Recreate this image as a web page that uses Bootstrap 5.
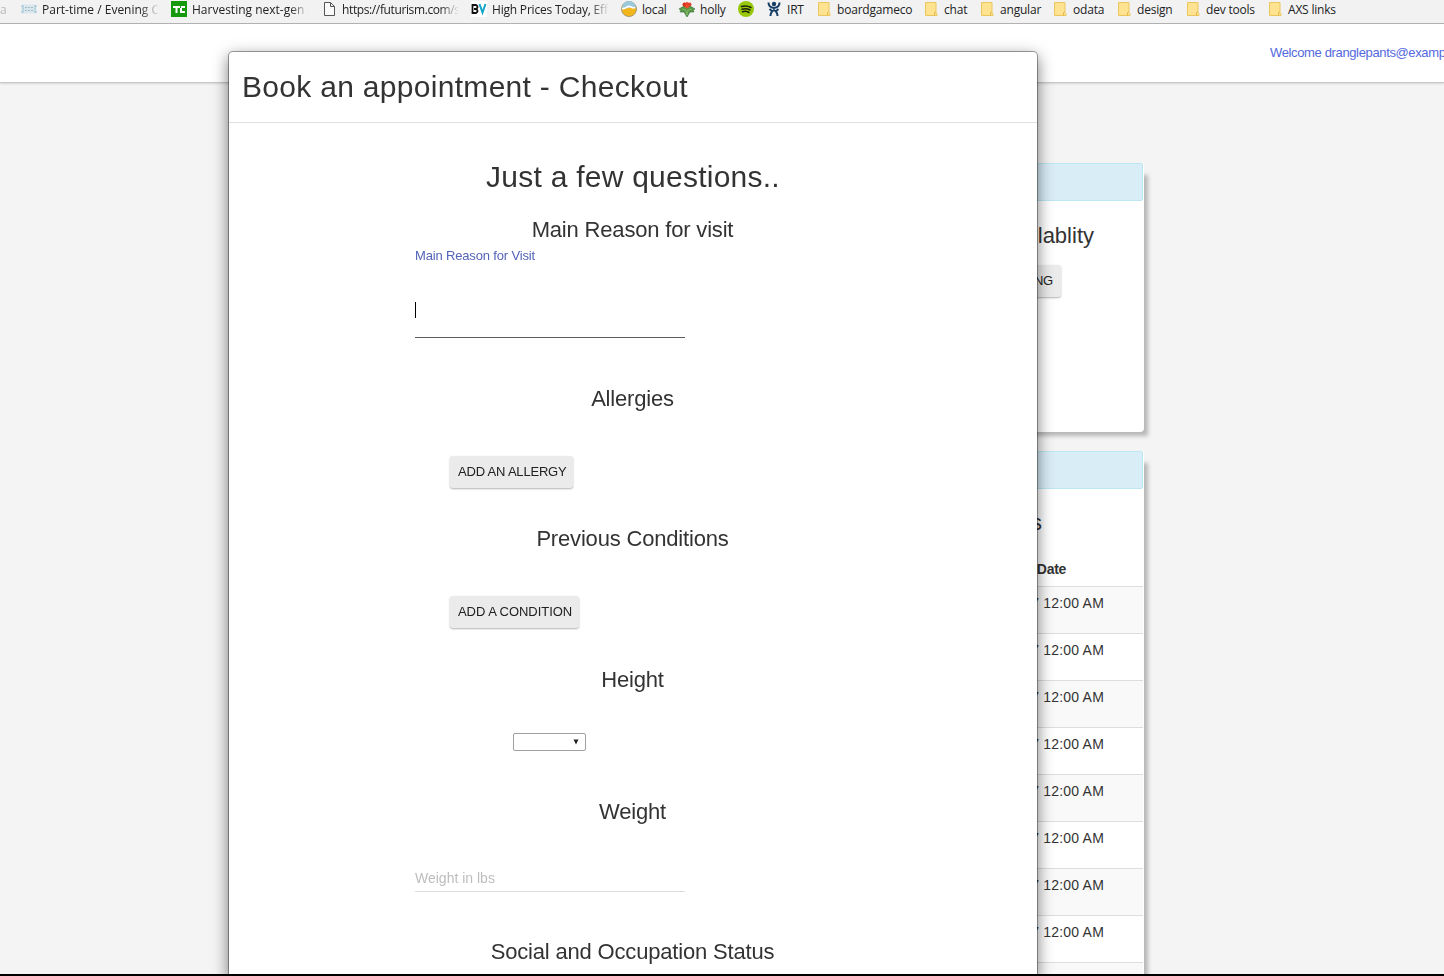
<!DOCTYPE html>
<html lang="en">
<head>
<meta charset="utf-8">
<meta name="viewport" content="width=device-width, initial-scale=1">
<title>Book an appointment</title>
<link href="https://cdn.jsdelivr.net/npm/bootstrap@5.3.0/dist/css/bootstrap.min.css" rel="stylesheet">
<style>
  html, body { height: 100%; }
  body { font-family: "Liberation Sans", Arial, sans-serif; font-size: 14px; line-height: 20px; color: #333; background: #f4f4f4; overflow: hidden; }

  /* bookmarks bar */
  .bookmarks { display: grid; grid-template-columns: 21px 150px 150px 150px 150px 58px 59px 28px 50px 107px 56px 73px 64px 69px 82px 1fr; height: 24px; padding-bottom: 6px; background: #f2f2f2; border-bottom: 1px solid #b3b3b3; font: 12px/17px "Open Sans", "Noto Sans", sans-serif; letter-spacing: -.2px; color: #222; white-space: nowrap; }
  .bookmarks > div { display: flex; align-items: center; gap: 5px; min-width: 0; }
  .bookmarks svg { width: 16px; height: 16px; flex: none; }
  .bookmarks span { padding-top: 1px; }
  .bookmarks .cut { width: 117px; overflow: hidden; -webkit-mask-image: linear-gradient(90deg, #000 84%, transparent 100%); mask-image: linear-gradient(90deg, #000 84%, transparent 100%); }
  .bookmarks .cut.wide { letter-spacing: 0; }
  .bookmarks .cut.tight { letter-spacing: -.38px; }

  .topbar { height: 59px; border-bottom: 1px solid #c8c8c8; box-shadow: 0 1px 2px rgba(0,0,0,.12); font-size: 13px; letter-spacing: -.36px; }
  .topbar a { color: #5468e0; margin-left: 1270px; white-space: nowrap; }

  /* dashboard panels */
  .panels { margin: 80px 300px 0 0; gap: 19px; }
  .panel-box { width: 420px; height: 269px; padding-right: 1px; background: #fff; border-radius: 4px; box-shadow: 8px 8px 4px -4px #b8b8b8; }
  .panel-box.tall { height: 525px; overflow: hidden; border-radius: 4px 4px 0 0; }
  .panel-strip { height: 38px; background: #d9edf7; border: 1px solid #bce8f1; border-radius: 2px; }
  .panel-box h4 { font-size: 22px; line-height: 24px; }
  .avail { margin: 23px 49px 17px 0; }
  .booking { margin-right: 82px; }
  .appts { margin: 22px 101px 0 0; }
  .btn-flat { height: 32px; padding: 0 8px; font-size: 13px; line-height: 30px; letter-spacing: -.2px; color: #212121; background: #ebebeb; border: 0; border-radius: 3px; box-shadow: 0 1px 2px rgba(0,0,0,.3); }
  .appt-table { margin-top: 20px; text-align: right; --bs-table-striped-bg: #f9f9f9; --bs-table-color: #333; --bs-table-striped-color: #333; border-color: #ddd; }
  .appt-table th { height: 31px; padding: 3px 77px 7px 0; line-height: 20px; letter-spacing: -.3px; border-bottom: 1px solid #ddd; }
  .appt-table td { height: 47px; padding: 6px 39px 0 0; letter-spacing: .2px; border-bottom: 1px solid #ddd; }

  /* checkout dialog */
  .checkout { overflow: hidden; }
  .checkout .modal-dialog { width: 810px; max-width: none; margin: 51px 0 0 228px; }
  .checkout .modal-content { height: 925px; border: 1px solid rgba(0,0,0,.35); border-bottom: 0; border-radius: 5px 5px 0 0; box-shadow: 0 5px 15px rgba(0,0,0,.5); color: #333; }
  .checkout .modal-header { height: 71px; padding: 0 13px; border-bottom: 1px solid #e0e0e0; }
  .checkout h2 { font-size: 30px; line-height: 34px; font-weight: 400; letter-spacing: .3px; }
  .checkout h4 { font-size: 22px; line-height: 24px; font-weight: 400; text-align: center; margin: 0; padding-right: 1px; letter-spacing: -.18px; }
  .checkout .modal-body { padding: 37px 0 0; }
  .checkout .intro { text-align: center; margin: 0 0 24px; letter-spacing: .24px; }
  .q-mid { height: 140px; }
  .q-height { height: 132px; }
  .q-long { height: 169px; }
  .q-cond { height: 141px; }
  .field { width: 270px; margin-left: 186px; }
  .field label { display: block; font-size: 13px; line-height: 20px; letter-spacing: -.16px; margin-top: 4px; color: #5464b8; }
  .field input { display: block; width: 100%; padding: 0; border: 0; border-radius: 0; outline: 0; background: none; font-size: 14px; color: #333; }
  .reason-line { height: 72px; padding-top: 36px; border-bottom: 1px solid #5c5c5c; }
  .caret { width: 1px; height: 16px; background: #000; }
  .field input.weight { height: 29px; padding-top: 2px; border-bottom: 1px solid #ddd; }
  .weight-field { padding-top: 39px; }
  .field input.weight::placeholder { color: #bdbdbd; opacity: 1; }
  .add-btn { margin: 45px 0 0 221px; padding-right: 7px; }
  .add-btn.cond { letter-spacing: -.05px; }
  .mini-select { width: 73px; height: 18px; margin: 41px 0 0 284px; padding-right: 6px; border: 1px solid #a0a0a0; border-radius: 2px; }
  .mini-select svg { width: 6px; height: 6px; }
  .screen-edge { height: 2px; background: #000; z-index: 1100; }
</style>
</head>
<body>
<svg width="0" height="0" class="position-absolute">
  <symbol id="folder" viewBox="0 0 16 16"><path d="M2.500 1.500h10.500v10l1 1v2H2.500z" fill="#ffe391" stroke="#eac65c"/><path d="M11.500 14.500v-3l1.500-.5" fill="none" stroke="#e5b945"/></symbol>
</svg>

<nav class="bookmarks">
  <div><span class="text-black-50 opacity-50">a</span></div>
  <div><svg viewBox="0 0 16 16"><rect x=".5" y="3.5" width="15" height="9" rx="1.5" fill="#d9e8ee"/><path d="M2 4v8M14 4v8M0 5h2M0 11h2M14 5h2M14 11h2" stroke="#9fc3d5"/><path d="M4 6.500h8M4 9.500h8" stroke="#a6b8c0" stroke-dasharray="2 1"/></svg><span class="cut wide">Part-time / Evening C</span></div>
  <div><svg viewBox="0 0 16 16"><path fill="#149a0c" d="M0 0h16v16H0z"/><path d="M2 5h7v2H6.500v5h-2V7H2zM14 5v2h-3v3h3v2H9V7h1V5z" fill="#fff"/></svg><span class="cut wide">Harvesting next-gen t</span></div>
  <div><svg viewBox="0 0 16 16"><path d="M3.500 1.500h6l4 4v9h-10zM9.500 1.500v4h4" fill="#fafafa" stroke="#555"/></svg><span class="cut tight">https://futurism.com/s</span></div>
  <div><svg viewBox="0 0 16 16"><path fill="#fff" d="M0 0h16v16H0z"/><path d="M1.500 4v8h3a2 2 0 0 0 0-4 2 2 0 0 0 0-4zM3 8h2" fill="none" stroke="#111" stroke-width="1.800"/><path d="m8.500 3 3 8.500 3-8.500" fill="none" stroke="#12a5c7" stroke-width="2"/></svg><span class="cut">High Prices Today, Eff</span></div>
  <div><svg viewBox="0 0 16 16"><circle cx="8" cy="8" r="7.500" fill="#f3b51c" stroke="#a99b6c"/><path d="M1 7a7 7 0 0 1 14 0c-3 1-5-1-8 0-2 1-4 1-6 0z" fill="#9bc9dc"/><path d="M1 7.500c4 1 5-3 8-2 2 1 3 2 5 1" fill="none" stroke="#fff" stroke-width="1.600"/></svg><span>local</span></div>
  <div><svg viewBox="0 0 16 16"><path d="M8 5 5 5 0 8l2 1-1 2 4 0 3 5 3-5 4 0-1-2 2-1-5-3z" fill="#579844" stroke="#386b38" stroke-width=".6"/><path d="m3 8 4 1 1 5 1-5 4-1" fill="none" stroke="#8cc070" stroke-width=".7"/><circle cx="5.500" cy="3.500" r="2" fill="#dc2d1c"/><circle cx="10.500" cy="3.500" r="2" fill="#e44226"/><circle cx="8" cy="5.500" r="2" fill="#ef4b2c"/><circle cx="8" cy="2.500" r="1.600" fill="#e8432a"/></svg><span>holly</span></div>
  <div><svg viewBox="0 0 16 16"><circle cx="8" cy="8" r="8" fill="#98c80b"/><path d="M3.500 5.500q5-1.500 9.500 1M4 8.200q4.500-1.200 8 .8M4.500 10.700q3.500-1 6.500.8" fill="none" stroke="#1c2408" stroke-width="1.500" stroke-linecap="round"/></svg></div>
  <div><svg viewBox="0 0 16 16"><circle cx="8" cy="3" r="2.200" fill="#173e67"/><path d="M2.500 1.500q0 5 5.500 5.500 5.500-.5 5.500-5.500M4.500 15q0-4 3.500-6 3.500 2 3.500 6M3.500 8l3.500 3M12.500 8 9 11" fill="none" stroke="#173e67" stroke-width="2"/></svg><span>IRT</span></div>
  <div><svg><use href="#folder"/></svg><span>boardgameco</span></div>
  <div><svg><use href="#folder"/></svg><span>chat</span></div>
  <div><svg><use href="#folder"/></svg><span>angular</span></div>
  <div><svg><use href="#folder"/></svg><span>odata</span></div>
  <div><svg><use href="#folder"/></svg><span>design</span></div>
  <div><svg><use href="#folder"/></svg><span>dev tools</span></div>
  <div><svg><use href="#folder"/></svg><span>AXS links</span></div>
</nav>

<header class="topbar bg-white d-flex align-items-center overflow-hidden"><a class="text-decoration-none" href="#">Welcome dranglepants@examp</a></header>

<main class="panels d-flex flex-column align-items-end">
  <section class="panel-box text-end">
    <div class="panel-strip"></div>
    <h4 class="avail fw-normal">Availablity</h4>
    <button class="btn btn-flat booking">BOOKING</button>
  </section>
  <section class="panel-box tall text-end">
    <div class="panel-strip"></div>
    <h4 class="appts fw-normal">Appointments</h4>
    <table class="table table-striped appt-table">
      <thead><tr><th>Date</th></tr></thead>
      <tbody>
        <tr><td>1/1/2017 12:00 AM</td></tr><tr><td>1/1/2017 12:00 AM</td></tr><tr><td>1/1/2017 12:00 AM</td></tr>
        <tr><td>1/1/2017 12:00 AM</td></tr><tr><td>1/1/2017 12:00 AM</td></tr><tr><td>1/1/2017 12:00 AM</td></tr>
        <tr><td>1/1/2017 12:00 AM</td></tr><tr><td>1/1/2017 12:00 AM</td></tr><tr><td></td></tr>
      </tbody>
    </table>
  </section>
</main>

<div class="modal d-block checkout" tabindex="-1">
  <div class="modal-dialog">
    <div class="modal-content">
      <div class="modal-header"><h2 class="mb-0">Book an appointment - Checkout</h2></div>
      <div class="modal-body">
        <h2 class="intro">Just a few questions..</h2>
        <section class="q-long">
          <h4>Main Reason for visit</h4>
          <div class="field"><label>Main Reason for Visit</label><div class="reason-line"><div class="caret"></div></div></div>
        </section>
        <section class="q-mid"><h4>Allergies</h4><button class="btn btn-flat add-btn">ADD AN ALLERGY</button></section>
        <section class="q-cond"><h4>Previous Conditions</h4><button class="btn btn-flat add-btn cond">ADD A CONDITION</button></section>
        <section class="q-height"><h4>Height</h4>
          <div class="mini-select d-flex align-items-center justify-content-end"><svg viewBox="0 0 6 6"><path d="M.5.500h5L3 5.500z" fill="#222"/></svg></div>
        </section>
        <section class="q-mid"><h4>Weight</h4><div class="field weight-field"><input class="weight" placeholder="Weight in lbs"></div></section>
        <section><h4>Social and Occupation Status</h4></section>
      </div>
    </div>
  </div>
</div>
<div class="screen-edge fixed-bottom"></div>
<script src="https://cdn.jsdelivr.net/npm/bootstrap@5.3.0/dist/js/bootstrap.bundle.min.js"></script>
</body>
</html>
